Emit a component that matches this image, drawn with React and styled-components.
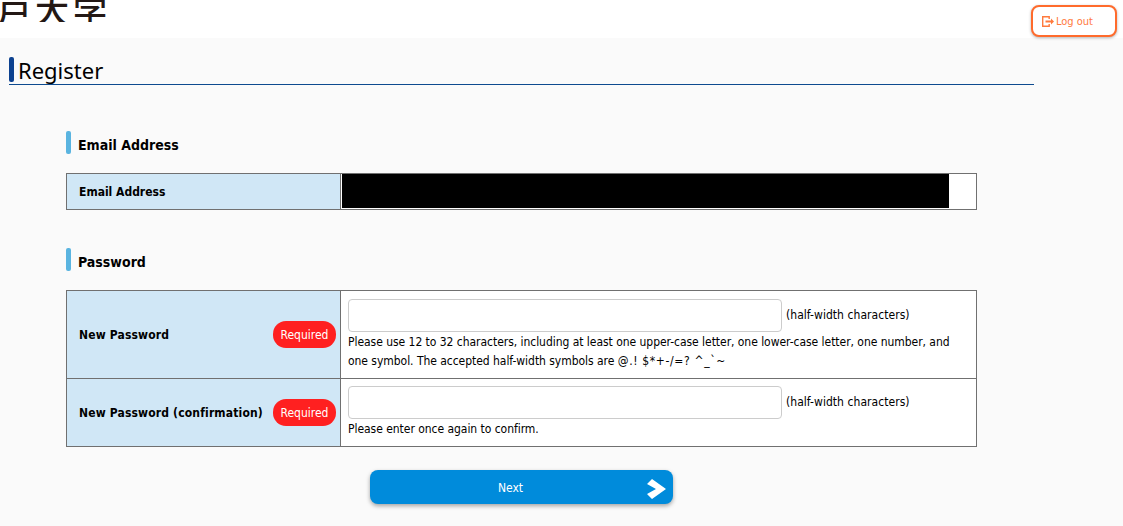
import React from "react";
import styled, { createGlobalStyle } from "styled-components";

const Global = createGlobalStyle`
  html, body { margin: 0; padding: 0; background: #fafafa; height: 526px; overflow: hidden; }
  body { font-family: "DejaVu Sans Condensed", "DejaVu Sans", sans-serif; color: #000; }
  * { box-sizing: border-box; }
`;

const Page = styled.div`
  width: 1123px;
  height: 526px;
  overflow: hidden;
`;

const Header = styled.header`
  height: 38px;
  background: #fff;
  display: flex;
  justify-content: space-between;
  padding: 5px 6px 0 0;
  overflow: visible;
`;

const LogoClip = styled.div`
  height: 22px;
  margin-top: -5px;
  width: 110px;
  overflow: hidden;
  display: flex;
  align-items: flex-end;
`;

const Logo = styled.span`
  display: block;
  margin-left: -3px;
  margin-bottom: -6px;
  font-family: "Noto Sans CJK JP", sans-serif;
  font-size: 34px;
  font-weight: 500;
  line-height: 38px;
  letter-spacing: 4px;
  color: #231815;
  white-space: nowrap;
`;

const LogoutButton = styled.button`
  width: 86px;
  height: 32px;
  background: #fff;
  border: 2px solid #ff6b2c;
  border-radius: 8px;
  box-shadow: 0 1px 3px rgba(0, 0, 0, 0.3);
  color: #ff7a3d;
  font: 11px "DejaVu Sans Condensed", "DejaVu Sans", sans-serif;
  display: flex;
  align-items: center;
  gap: 2px;
  padding: 0 0 0 9px;
`;

const Main = styled.main`
  padding: 19px 89px 0 9px;
`;

const PageTitle = styled.h1`
  margin: 0;
  height: 28px;
  border-bottom: 1px solid #0d4a8f;
  display: flex;
  align-items: flex-start;
  gap: 4px;
  font: 400 22px/27px "Noto Sans", sans-serif;
`;

const TitleBar = styled.span`
  width: 5px;
  height: 25px;
  border-radius: 2px;
  background: #0d4290;
`;

const Content = styled.div`
  padding: 46px 57px 0;
`;

const SectionTitle = styled.h2`
  margin: 0 0 19px;
  height: 23px;
  display: flex;
  align-items: center;
  gap: 7px;
  font: 700 14px/17px "DejaVu Sans Condensed", "DejaVu Sans", sans-serif;
`;

const SectionText = styled.span`
  padding-top: 6px;
`;

const SectionBar = styled.span`
  width: 5px;
  height: 23px;
  border-radius: 2px;
  background: #5ab4e0;
`;

const Table = styled.div`
  width: 911px;
  border: 1px solid #707070;
  margin-bottom: 38px;
  background: #fff;
`;

const Row = styled.div`
  display: grid;
  grid-template-columns: 274px 1fr;
  min-height: ${(p) => p.$height}px;
  & + & { border-top: 1px solid #707070; }
`;

const LabelCell = styled.div`
  background: #d0e7f6;
  border-right: 1px solid #707070;
  display: flex;
  align-items: center;
  justify-content: space-between;
  padding: 0 4px 0 12px;
  font: 700 12px "DejaVu Sans Condensed", "DejaVu Sans", sans-serif;
  letter-spacing: ${(p) => p.$tracking || 0}px;
`;

const ValueCell = styled.div`
  padding: ${(p) => p.$top}px 7px 0;
  font-size: 12px;
  line-height: 19px;
`;

const RedactedCell = styled.div`
  padding: 0 0 0 1px;
`;

const Redacted = styled.div`
  width: 607px;
  height: 34px;
  background: #000;
`;

const Badge = styled.span`
  width: 63px;
  height: 27px;
  padding-top: 1px;
  border-radius: 13px;
  background: #ff2020;
  color: #fff;
  letter-spacing: 0;
  font: 400 12px/26px "DejaVu Sans Condensed", "DejaVu Sans", sans-serif;
  text-align: center;
`;

const InputLine = styled.div`
  display: flex;
  align-items: center;
  gap: 4px;
  margin-bottom: 1px;
  letter-spacing: 0.05px;
`;

const TextInput = styled.input`
  width: 434px;
  height: 33px;
  border: 1px solid #ccc;
  border-radius: 4px;
  background: #fff;
`;

const Note = styled.div`
  width: 610px;
  letter-spacing: -0.04px;
`;

const Symbols = styled.span`
  letter-spacing: 0.65px;
`;

const Actions = styled.div`
  margin-top: -15px;
  padding-left: 304px;
`;

const NextButton = styled.button`
  position: relative;
  width: 303px;
  height: 34px;
  padding: 2px 22px 0 0;
  border: 0;
  border-radius: 8px;
  background: #008bdb;
  box-shadow: 0 2px 4px rgba(0, 0, 0, 0.35);
  color: #fff;
  font: 12px "DejaVu Sans Condensed", "DejaVu Sans", sans-serif;
`;

const Arrow = styled.svg`
  position: absolute;
  right: 7px;
  top: 9px;
`;

export default function App() {
  return (
    <Page>
      <Global />
      <Header>
        <LogoClip><Logo>戸大学</Logo></LogoClip>
        <LogoutButton>
          <svg width="12" height="11" viewBox="0 0 12 11" fill="none">
            <path d="M7.2 3V.7H.7v9.6h6.5V8" stroke="#ff7a3d" strokeWidth="1.4" />
            <path d="M3.5 4.6H9V2.4l3 3.1-3 3.1V6.4H3.5z" fill="#ff7a3d" />
          </svg>
          Log out
        </LogoutButton>
      </Header>
      <Main>
        <PageTitle><TitleBar />Register</PageTitle>
        <Content>
          <SectionTitle><SectionBar /><SectionText>Email Address</SectionText></SectionTitle>
          <Table>
            <Row $height={35}>
              <LabelCell>Email Address</LabelCell>
              <RedactedCell><Redacted /></RedactedCell>
            </Row>
          </Table>
          <SectionTitle><SectionBar /><SectionText>Password</SectionText></SectionTitle>
          <Table>
            <Row $height={87}>
              <LabelCell $tracking={0.16}>New Password<Badge>Required</Badge></LabelCell>
              <ValueCell $top={8}>
                <InputLine><TextInput type="text" />(half-width characters)</InputLine>
                <Note>Please use 12 to 32 characters, including at least one upper-case letter, one lower-case letter, one number, and one symbol. The accepted half-width symbols are <Symbols>@.! $*+-/=? ^_`~</Symbols></Note>
              </ValueCell>
            </Row>
            <Row $height={68}>
              <LabelCell $tracking={0.16}>New Password (confirmation)<Badge>Required</Badge></LabelCell>
              <ValueCell $top={7}>
                <InputLine><TextInput type="text" />(half-width characters)</InputLine>
                <Note>Please enter once again to confirm.</Note>
              </ValueCell>
            </Row>
          </Table>
          <Actions>
            <NextButton>
              Next
              <Arrow width="19" height="20" viewBox="0 0 19 20"><path d="M0 5L5 0l14 10L5 20l-5-5 9-5z" fill="#fff" /></Arrow>
            </NextButton>
          </Actions>
        </Content>
      </Main>
    </Page>
  );
}
